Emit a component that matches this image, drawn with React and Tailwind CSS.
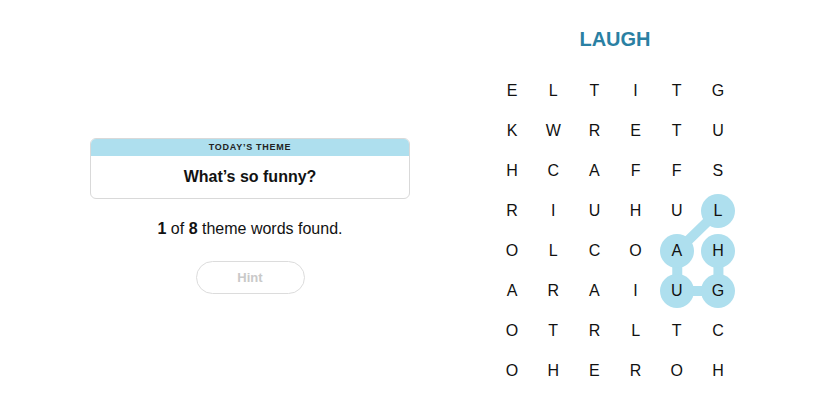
import React from 'react';

const board = [
  'ELTITG',
  'KWRETU',
  'HCAFFS',
  'RIUHUL',
  'OLCOAH',
  'ARAIUG',
  'OTRLTC',
  'OHEROH',
];

// found word path, as [row, col]
const path = [[3, 5], [4, 4], [5, 4], [5, 5], [4, 5]];

const CELL_W = 41.17;
const CELL_H = 40;

const isFound = (r, c) => path.some(([pr, pc]) => pr === r && pc === c);

const Board = () => {
  const pts = path.map(([r, c]) => `${c * CELL_W + CELL_W / 2},${r * CELL_H + CELL_H / 2}`).join(' ');
  return (
    <div className="relative w-[247px]">
      <svg className="absolute inset-0" width="247" height="320">
        <polyline points={pts} fill="none" stroke="#aedfee" strokeWidth="10" strokeLinejoin="round" strokeLinecap="round" />
      </svg>
      <div className="relative grid grid-cols-6">
        {board.map((row, r) =>
          row.split('').map((ch, c) => (
            <div key={`${r}-${c}`} className="h-10 flex items-center justify-center">
              <div
                className={
                  isFound(r, c)
                    ? 'w-[34px] h-[34px] rounded-full bg-[#aedfee] flex items-center justify-center text-[16px] text-[#111]'
                    : 'w-[34px] h-[34px] rounded-full flex items-center justify-center text-[16px] text-[#111]'
                }
              >
                {ch}
              </div>
            </div>
          ))
        )}
      </div>
    </div>
  );
};

export default function App() {
  return (
    <div className="w-[825px] h-[413px] bg-white flex font-['Liberation_Sans',Arial,sans-serif] text-[#121212]">
      <div className="w-[500px] flex flex-col items-center pt-[138px]">
        <div className="w-[320px] border border-[#d9d9d9] rounded-md overflow-hidden">
          <div className="h-[17px] bg-[#aedfee] flex items-center justify-center text-[9px] font-bold tracking-[0.08em] text-[#222]">
            TODAY’S THEME
          </div>
          <div className="h-[42px] flex items-center justify-center text-[16px] font-bold">
            What’s so funny?
          </div>
        </div>
        <p className="mt-[20px] text-[16px] leading-5">
          <span className="font-bold">1</span> of <span className="font-bold">8</span> theme words found.
        </p>
        <button className="mt-[22px] w-[109px] h-[33px] rounded-full border border-[#dcdcdc] text-[#c9c9c9] font-bold text-[13px]">
          Hint
        </button>
      </div>
      <div className="flex flex-col pt-[25px]">
        <div className="w-[247px] -ml-[8.5px] h-7 flex items-center justify-center text-[20px] font-bold text-[#2a80a3]">
          LAUGH
        </div>
        <div className="mt-[18px] -ml-[8.5px]">
          <Board />
        </div>
      </div>
    </div>
  );
}
